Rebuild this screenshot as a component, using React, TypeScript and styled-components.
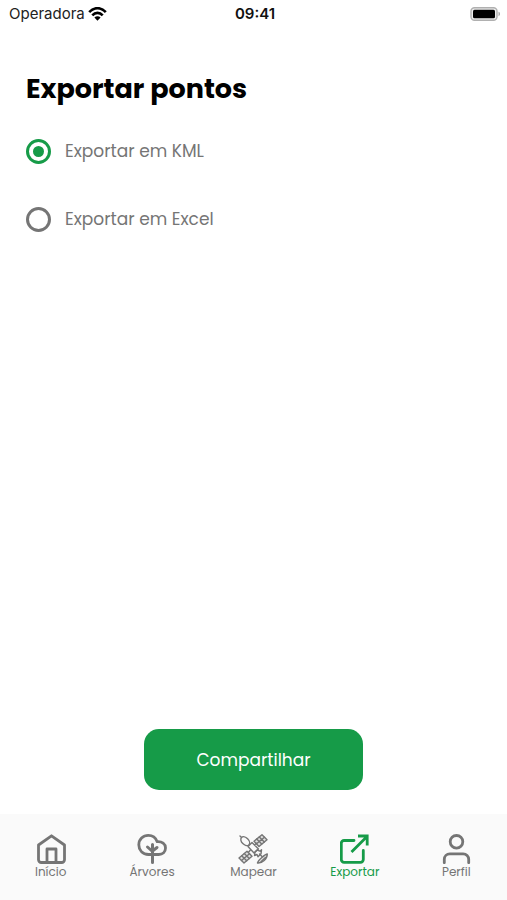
import React, { useState } from "react";
import styled, { createGlobalStyle } from "styled-components";

const GREEN = "#169b48";
const GRAY = "#757575";

const GlobalStyle = createGlobalStyle`
  *, *::before, *::after { box-sizing: border-box; }
  body {
    margin: 0;
    background: #fff;
    color: #000;
    font-family: Poppins, Inter, sans-serif;
  }
`;

const Screen = styled.div`
  display: flex;
  flex-direction: column;
  min-height: 100vh;
`;

const StatusBar = styled.header`
  display: grid;
  grid-template-columns: 1fr auto 1fr;
  align-items: center;
  height: 28px;
  padding: 0 6px 0 9px;
  font-family: Inter, sans-serif;
  font-size: 15px;
  line-height: 20px;
  color: #222;
`;

const Carrier = styled.span`
  display: flex;
  align-items: center;
  gap: 3px;
`;

const Clock = styled.time`
  font-weight: 600;
  color: #111;
`;

const BatteryIcon = styled.svg`
  justify-self: end;
`;

const Main = styled.main`
  flex: 1;
  display: flex;
  flex-direction: column;
  padding: 41px 26px 24px;
`;

const Title = styled.h1`
  margin: 0;
  font-size: 27px;
  line-height: 40px;
  font-weight: 700;
`;

const Options = styled.fieldset`
  display: flex;
  flex-direction: column;
  gap: 40px;
  margin: 0;
  padding: 28px 0 0;
  border: 0;
`;

const Option = styled.label`
  display: flex;
  align-items: center;
  gap: 14px;
  font-size: 17px;
  line-height: 28px;
  color: ${GRAY};
`;

const Radio = styled.input`
  appearance: none;
  display: grid;
  place-items: center;
  width: 25px;
  height: 25px;
  margin: 0;
  border: 3px solid ${GRAY};
  border-radius: 50%;

  &:checked { border-color: ${GREEN}; }
  &:checked::before {
    content: "";
    width: 11px;
    height: 11px;
    border-radius: 50%;
    background: ${GREEN};
  }
`;

const ShareButton = styled.button`
  align-self: center;
  margin-top: auto;
  width: 48%;
  height: 61px;
  border: 0;
  border-radius: 15px;
  background: ${GREEN};
  color: #fff;
  font: inherit;
  font-size: 17px;
  line-height: 28px;
`;

const TabBar = styled.nav`
  display: grid;
  grid-template-columns: repeat(5, 1fr);
  height: 86px;
  padding-top: 20px;
  background: #fafafa;
`;

const Tab = styled.a<{ $active?: boolean }>`
  display: flex;
  flex-direction: column;
  align-items: center;
  color: ${(p) => (p.$active ? GREEN : GRAY)};
  font-size: 12px;
  line-height: 16px;
  text-decoration: none;
`;

const TabIcon = styled.svg`
  width: 30px;
  height: 30px;
  fill: none;
  stroke: currentColor;
  stroke-width: 2.8;
  stroke-linecap: round;
  stroke-linejoin: round;
`;

const HomeIcon = () => (
  <TabIcon viewBox="0 0 30 30" aria-hidden="true">
    <path d="M2.500 11 15.500 1.800l13 9.200v14.700a2.800 2.800 0 0 1-2.800 2.800H5.300a2.800 2.800 0 0 1-2.800-2.800z" />
    <path d="M11 28V15h9v13" />
  </TabIcon>
);

const TreeIcon = () => (
  <TabIcon viewBox="0 0 30 30" aria-hidden="true">
    <path d="M11.500 20.500C5.500 20.500 1.800 16 1.800 10.800 1.800 5.500 6 1.400 11.300 1.400c4 0 7.400 2.300 8.900 6.300 4.800-.4 8.300 2.300 8.300 6.300s-2.900 6.500-6.700 6.500z" />
    <path d="M15.500 28.500V10.500M15.500 17.500 10.500 13M15.500 17l4.500-3.500" strokeWidth="3" />
  </TabIcon>
);

const SatelliteIcon = () => (
  <TabIcon viewBox="0 0 30 30" aria-hidden="true">
    <g strokeWidth="1.400">
      <g fill="currentColor" fillOpacity="0.2">
        <path d="m16 7.200 8-6.500 5 5-8 6.800zM1 24l8-6.700 5 5L6 29z" />
        <path d="M29.300 20c-2 0-9.300 6.500-9.800 9 4.800.5 9.800-4 9.800-9z" />
      </g>
      <path d="m18.500 9.800 8-6.600M18.700 5.100l5 5M21.300 2.900l5 5M3.500 26.500l8-6.700M3.700 21.800l5 5M6.300 19.600l5 5" />
      <ellipse cx="7.200" cy="7.200" rx="5.200" ry="3.400" transform="rotate(45 7.200 7.200)" />
      <path d="m10 12.500 4-4 6.500 6.500-4.500 4zM3.300 3.200 2 2M16.500 11l2-1.800M12 16.500l-1.500 1.800" />
      <path d="m17 18 2-2 3 1.200 1.500-1.400-.5 4-3 3-1-2.300-2.500 1zM21.500 20l2.500 2.500M27.500 23.500l-4.500 4.200" />
    </g>
  </TabIcon>
);

const ExportIcon = () => (
  <TabIcon viewBox="0 0 30 30" aria-hidden="true">
    <path d="M14 6.500H4.100A2.800 2.800 0 0 0 1.300 9.300v16.200A2.800 2.800 0 0 0 4.100 28.300H20.500a2.800 2.800 0 0 0 2.800-2.800V16.500" />
    <path d="M11.500 18 26.500 3M18 2H27.200v9.500" strokeLinecap="butt" strokeLinejoin="miter" />
  </TabIcon>
);

const ProfileIcon = () => (
  <TabIcon viewBox="0 0 30 30" aria-hidden="true">
    <circle cx="15.500" cy="7.800" r="6.300" />
    <path d="M3.300 28.700v-3.400a5.500 5.500 0 0 1 5.500-5.500h13.400a5.500 5.500 0 0 1 5.500 5.500v3.400" />
  </TabIcon>
);

const tabs = [
  { label: "Início", href: "#inicio", Icon: HomeIcon },
  { label: "Árvores", href: "#arvores", Icon: TreeIcon },
  { label: "Mapear", href: "#mapear", Icon: SatelliteIcon },
  { label: "Exportar", href: "#exportar", Icon: ExportIcon, active: true },
  { label: "Perfil", href: "#perfil", Icon: ProfileIcon },
];

const formats = [
  { value: "kml", label: "Exportar em KML" },
  { value: "excel", label: "Exportar em Excel" },
];

export default function App() {
  const [format, setFormat] = useState("kml");

  return (
    <>
      <GlobalStyle />
      <Screen>
        <StatusBar>
          <Carrier>
            Operadora
            <svg width="19" height="14" viewBox="0 0 19 14" fill="none" stroke="#000" strokeWidth="2.600" aria-hidden="true">
              <path d="M1.200 5.200C6-.2 13-.2 17.800 5.200M4.300 8.300c3-3.300 7.400-3.300 10.400 0" />
              <path d="M6.400 10.600c1.800-1.800 4.400-1.800 6.200 0L9.500 13.700z" fill="#000" stroke="none" />
            </svg>
          </Carrier>
          <Clock>09:41</Clock>
          <BatteryIcon width="31" height="14" viewBox="0 0 31 14" aria-hidden="true">
            <rect x="1" y="0.800" width="26" height="12.400" rx="3.500" fill="#eee" stroke="#b0b0b0" strokeWidth="1.400" />
            <rect x="3" y="2.800" width="22" height="8.400" rx="1.500" fill="#000" />
            <path d="M28.500 4.800c2 .6 2 3.800 0 4.400z" fill="#aaa" />
          </BatteryIcon>
        </StatusBar>
        <Main>
          <Title id="export-title">Exportar pontos</Title>
          <Options aria-labelledby="export-title">
            {formats.map(({ value, label }) => (
              <Option key={value}>
                <Radio
                  type="radio"
                  name="format"
                  value={value}
                  checked={format === value}
                  onChange={() => setFormat(value)}
                />
                {label}
              </Option>
            ))}
          </Options>
          <ShareButton type="button">Compartilhar</ShareButton>
        </Main>
        <TabBar>
          {tabs.map(({ label, href, Icon, active }) => (
            <Tab key={label} href={href} $active={active} aria-current={active ? "page" : undefined}>
              <Icon />
              {label}
            </Tab>
          ))}
        </TabBar>
      </Screen>
    </>
  );
}
